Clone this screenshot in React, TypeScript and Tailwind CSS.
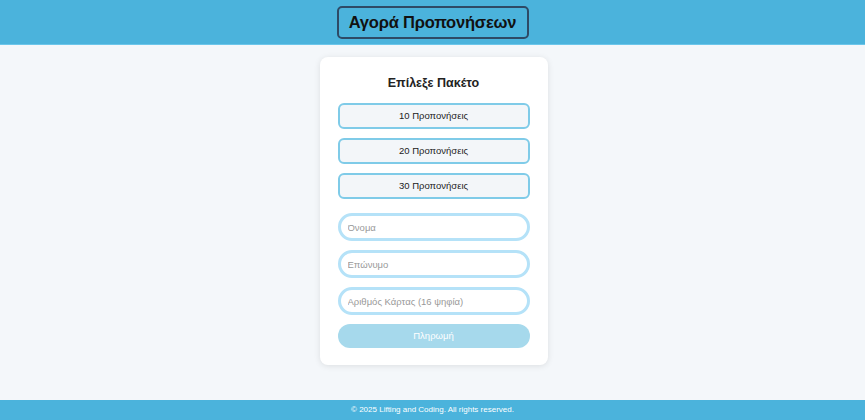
export default function App() {
  const packs = ["10 Προπονήσεις", "20 Προπονήσεις", "30 Προπονήσεις"];
  const fields = ["Όνομα", "Επώνυμο", "Αριθμός Κάρτας (16 ψηφία)"];

  return (
    <div className="flex flex-col h-[420px] bg-[#f4f7fa] font-['Liberation_Sans',Arial,sans-serif]">
      {/* Header */}
      <header className="h-[45px] bg-[#4bb3dc] flex items-center justify-center border-b border-[#6cc6ea]">
        <h1 className="h-[33px] w-[192px] flex items-center justify-center border-2 border-[#2e4a66] rounded-[5px] text-[16.5px] font-bold text-[#111] tracking-[-0.2px]">
          Αγορά Προπονήσεων
        </h1>
      </header>

      {/* Main */}
      <main className="flex-1 flex justify-center pt-[12px] pl-[2px]">
        <div className="w-[228px] h-[308px] bg-white rounded-[8px] shadow-[0_1px_6px_rgba(0,0,0,0.1)] px-[18px] pt-[19px]">
          <h2 className="text-center text-[12.5px] font-bold text-[#222] leading-[15px]">Επίλεξε Πακέτο</h2>
          <div className="flex flex-col gap-[9px] mt-[12px]">
            {packs.map((p) => (
              <button
                key={p}
                className="h-[26px] w-full rounded-[6px] border-2 border-[#7fcbe8] bg-[#f3f6f9] text-[9.5px] text-[#222] pt-[1px]"
              >
                {p}
              </button>
            ))}
          </div>
          <div className="flex flex-col gap-[9px] mt-[14px]">
            {fields.map((f) => (
              <input
                key={f}
                placeholder={f}
                className="h-[28px] w-full rounded-full border-[3px] border-[#b5e2f8] px-[7px] text-[9.5px] placeholder:text-[#999] outline-none"
              />
            ))}
          </div>
          <button className="mt-[9px] h-[24px] w-full rounded-full bg-[#a6d9ec] text-white text-[9.5px]">
            Πληρωμή
          </button>
        </div>
      </main>

      {/* Footer */}
      <footer className="h-[20px] bg-[#4bb3dc] flex items-center justify-center text-white text-[8px]">
        © 2025 Lifting and Coding. All rights reserved.
      </footer>
    </div>
  );
}
